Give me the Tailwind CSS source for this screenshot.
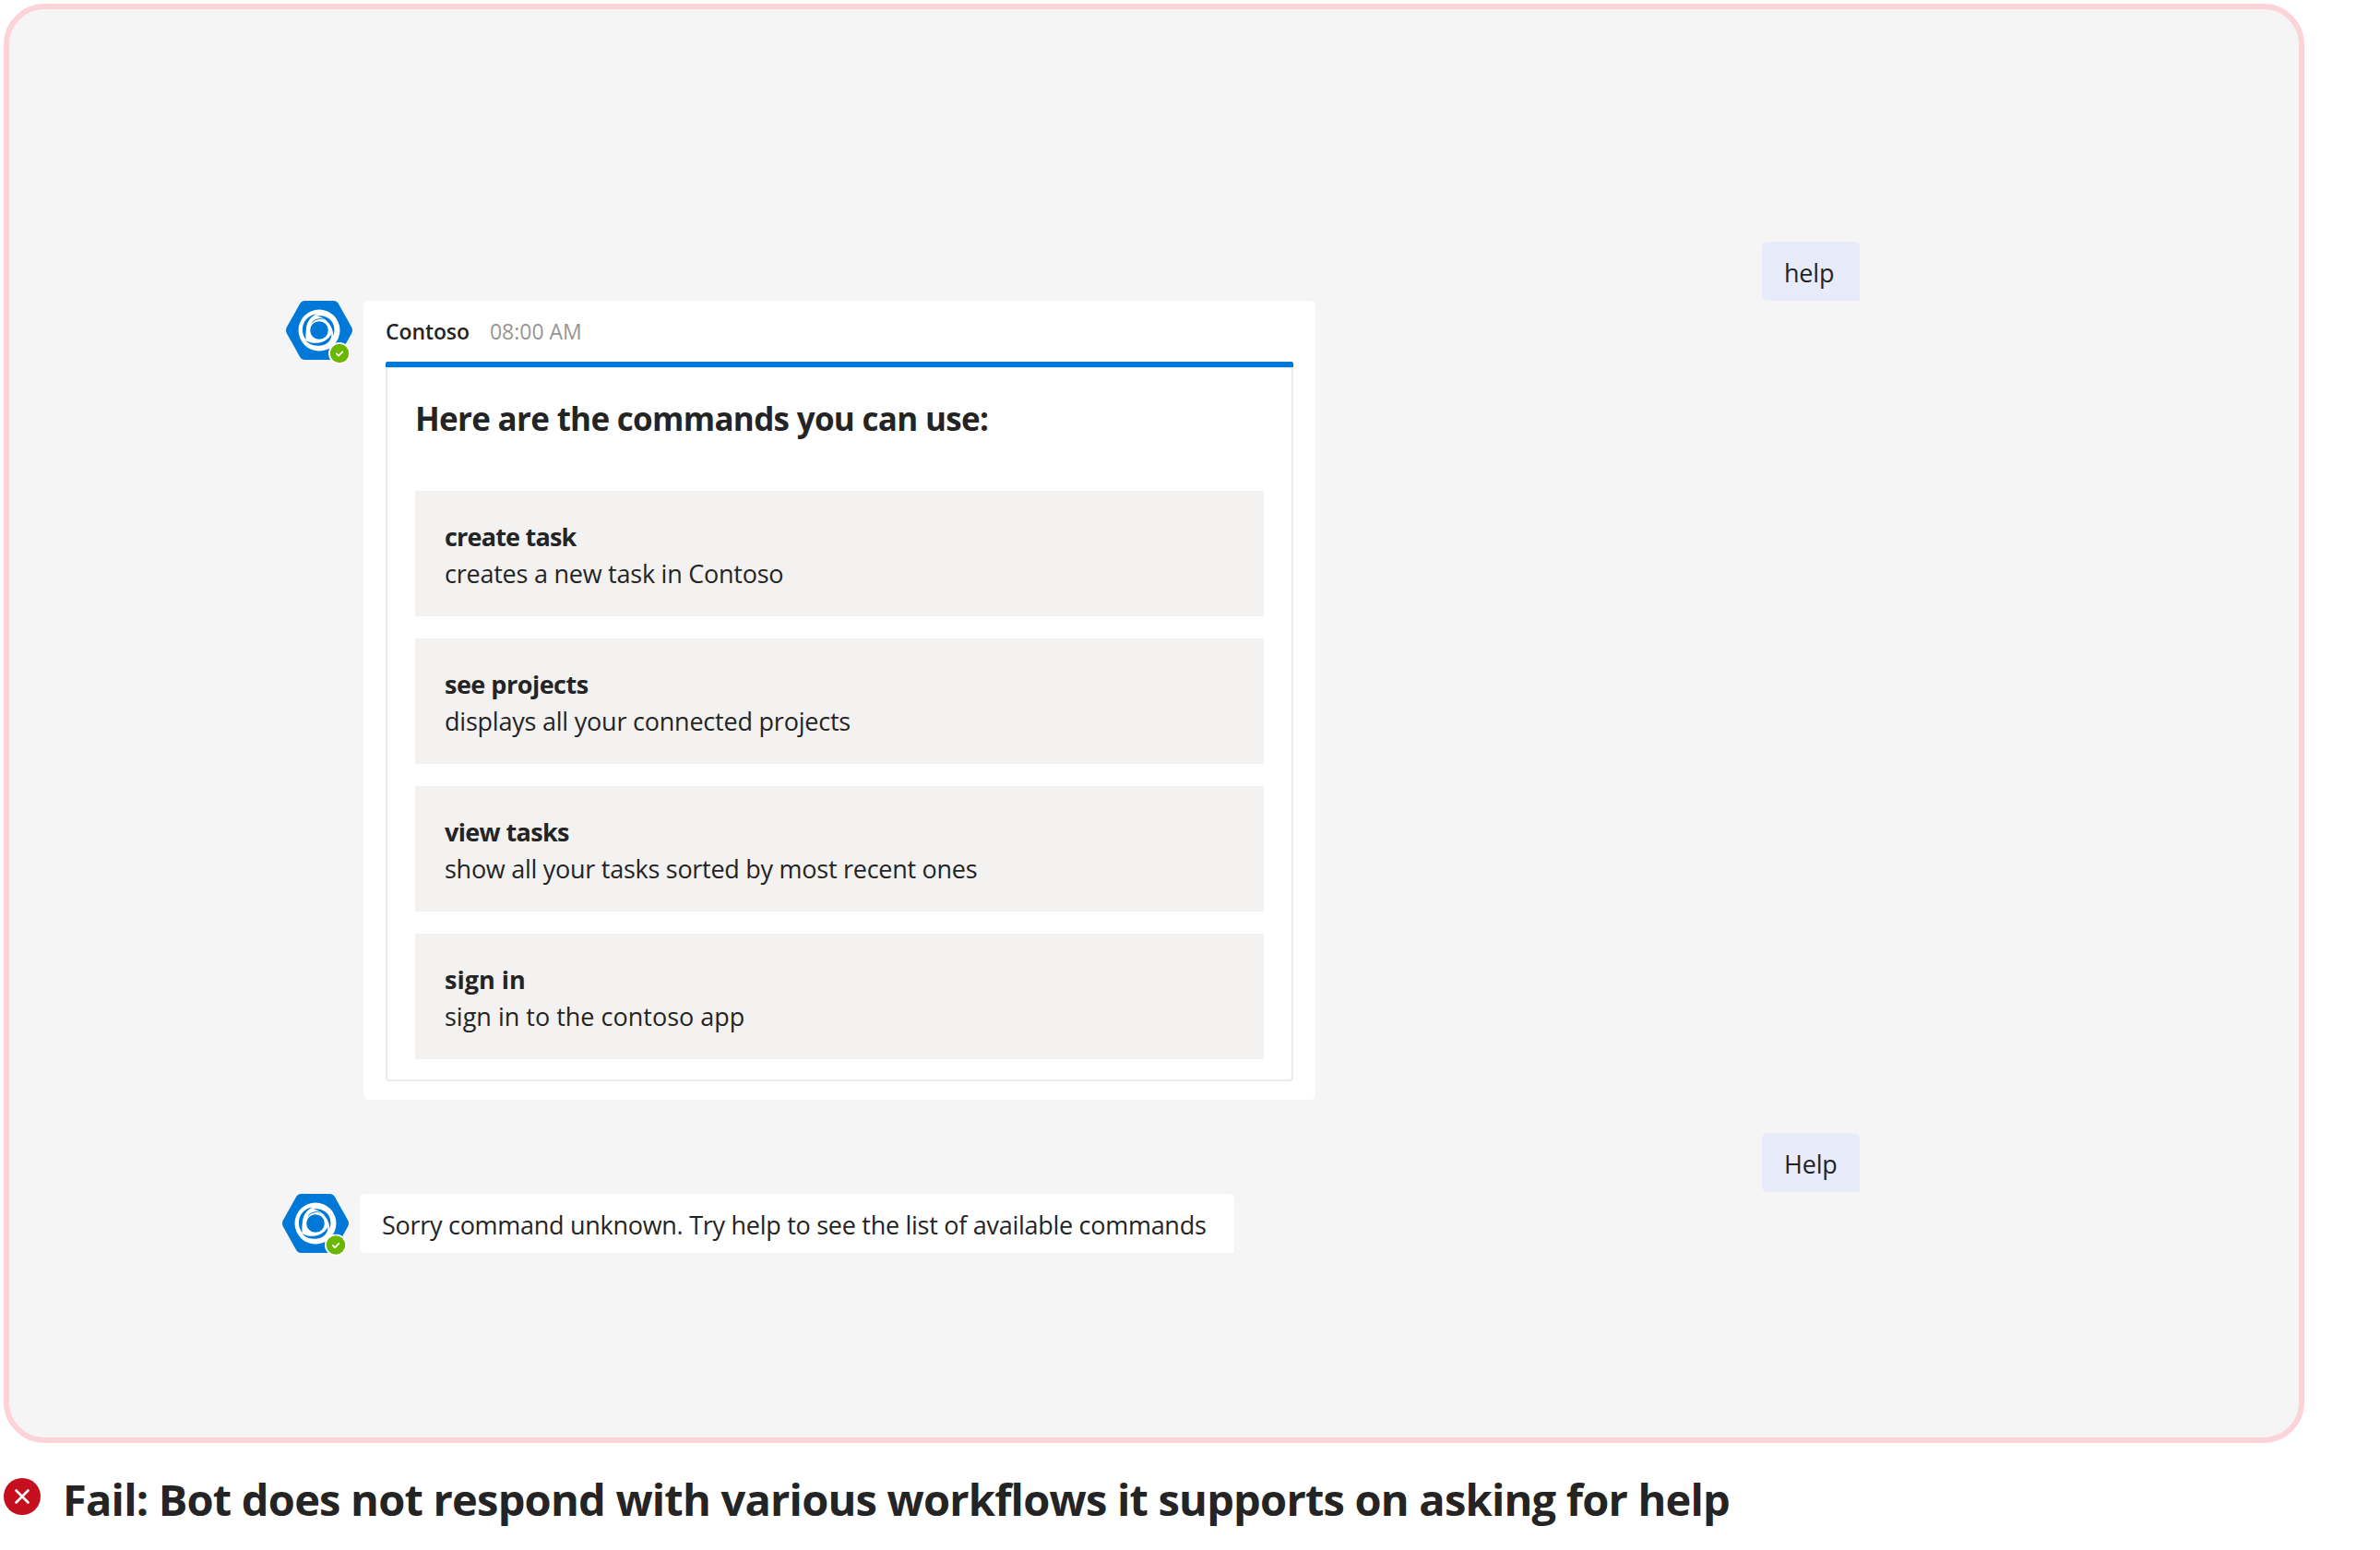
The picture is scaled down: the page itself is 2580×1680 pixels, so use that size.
<!DOCTYPE html>
<html lang="en">
<head>
    <meta charset="UTF-8">
    <meta name="viewport" content="width=device-width, initial-scale=1.0">
    <title>Contoso bot - help command</title>
    <script src="https://cdn.jsdelivr.net/npm/@tailwindcss/browser@4"></script>
    <style>
        body {
            font-family: 'Open Sans', 'Noto Sans', sans-serif;
        }
    </style>
</head>
<body class="bg-white text-[#242424] overflow-hidden">

    <!-- Shared avatar parts -->
    <svg class="hidden">
        <symbol id="logo" viewBox="0 0 76 72">
            <path fill="#0078d7" d="M20.5 0h31q3.500 0 5.300 3l14.400 25.800q1.600 3.200 0 6.400L56.800 61q-1.800 3-5.300 3h-31q-3.500 0-5.300-3L.8 35.200q-1.600-3.200 0-6.400L15.200 3Q17 0 20.500 0z"/>
            <circle cx="36" cy="32" r="22.500" fill="#fff"/>
            <circle cx="36" cy="32" r="9.800" fill="#0078d7"/>
            <g fill="#0078d7">
                <path d="M32.500 14.500C23 16 17.700 23.500 17.900 32c.2 4 1.500 7.500 4 10C21 38 21.500 35 21.800 32 22 24.500 25.500 18 32.500 14.500z"/>
                <path d="M34 16.600c9-1.500 18 4.200 18.400 13.900.1 2.500-.2 5-1 7.200C50.700 28 45 19.300 34 16.600z"/>
                <path d="M21.300 43.200C31 48 43.500 46.500 49.400 36c.2 6.500-4.900 12.300-12.900 12.800-6 .3-11.500-1.800-15.200-5.600z"/>
                <path d="M27.500 24.500c2.500-4.500 9-7 15-3.700-5.300-1.500-10.500-.7-15 3.700z"/>
            </g>
        </symbol>
        <symbol id="badge" viewBox="0 0 24 24">
            <circle cx="12" cy="12" r="12" fill="#fff"/>
            <circle cx="12" cy="12" r="10.200" fill="#6bb700"/>
            <path d="M8.800 12.300l2.300 2.300 4.200-4.300" fill="none" stroke="#fff" stroke-width="1.800" stroke-linecap="round" stroke-linejoin="round"/>
        </symbol>
    </svg>

    <!-- Chat panel -->
    <main class="mt-1 ml-1 flex h-[1560px] w-[2494px] flex-col rounded-[44px] border-6 border-[#fcd3d7] bg-[#f5f5f5] pt-[252px]">

        <div class="mr-[476px] h-16 w-[106px] self-end rounded-md rounded-br-none bg-[#e8ebfa] pl-6 text-[27px] leading-[68px] tracking-[-0.2px]">help</div>

        <div class="ml-[300px] flex items-start gap-2">
            <svg class="h-[72px] w-[76px]">
                <use href="#logo"/>
                <use href="#badge" x="46" y="45" width="24" height="24"/>
            </svg>
            <section class="h-[866px] w-[1032px] rounded-md bg-white px-6">
                <div class="flex h-[66px] gap-[22px] text-[23px] leading-[67px]">
                    <span class="font-semibold tracking-[-0.1px]">Contoso</span>
                    <span class="text-[#979593]">08:00 AM</span>
                </div>
                <div class="h-[780px] rounded-sm border-2 border-t-0 border-[#ebebeb]">
                    <div class="-mx-0.5 h-[7px] rounded-t-[2px] border-b border-[#d9ebf9] bg-[#0078d7]"></div>
                    <h2 class="pt-7 pl-[30px] text-[35px] leading-[54px] font-bold tracking-[-0.7px]">Here are the commands you can use:</h2>
                    <ul class="mt-[51px] flex flex-col gap-6 px-[30px] text-[27px] leading-10">
                        <li class="h-[136px] bg-[#f3f2f1] px-8 pt-[30px]">
                            <p class="font-bold tracking-[-0.8px]">create task</p>
                            <p class="tracking-[-0.24px]">creates a new task in Contoso</p>
                        </li>
                        <li class="h-[136px] bg-[#f3f2f1] px-8 pt-[30px]">
                            <p class="font-bold tracking-[-0.5px]">see projects</p>
                            <p class="tracking-[-0.22px]">displays all your connected projects</p>
                        </li>
                        <li class="h-[136px] bg-[#f3f2f1] px-8 pt-[30px]">
                            <p class="font-bold tracking-[-0.65px]">view tasks</p>
                            <p class="tracking-[-0.27px]">show all your tasks sorted by most recent ones</p>
                        </li>
                        <li class="h-[136px] bg-[#f3f2f1] px-8 pt-[30px]">
                            <p class="font-bold">sign in</p>
                            <p>sign in to the contoso app</p>
                        </li>
                    </ul>
                </div>
            </section>
        </div>

        <div class="mt-9 mr-[476px] h-16 w-[106px] self-end rounded-md rounded-br-none bg-[#e8ebfa] pl-6 text-[27px] leading-[68px] tracking-[-0.2px]">Help</div>

        <div class="mt-0.5 ml-[296px] flex items-start gap-2">
            <svg class="h-[72px] w-[76px]">
                <use href="#logo"/>
                <use href="#badge" x="46" y="43.500" width="24" height="24"/>
            </svg>
            <div class="h-16 w-[948px] rounded-md rounded-br-none bg-white pl-6 text-[27px] leading-[68px] tracking-[-0.28px] whitespace-nowrap">Sorry command unknown. Try help to see the list of available commands</div>
        </div>
    </main>

    <!-- Verdict -->
    <footer class="mt-[26px] ml-1 flex items-start gap-6">
        <svg class="mt-3 h-10 w-10" viewBox="0 0 40 40">
            <circle cx="20" cy="20" r="20" fill="#c50f1f"/>
            <path d="M13.500 13.500l13 13M26.500 13.500l-13 13" stroke="#fff" stroke-width="2.600" stroke-linecap="round"/>
        </svg>
        <h1 class="text-[47px] leading-[70px] font-bold tracking-[-0.79px] whitespace-nowrap">Fail: Bot does not respond with various workflows it supports on asking for help</h1>
    </footer>

</body>
</html>
